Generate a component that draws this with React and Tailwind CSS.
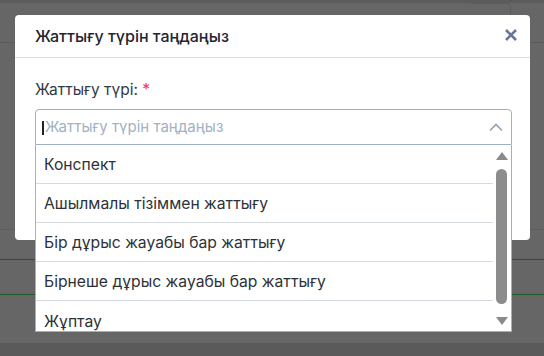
import React from "react";

const items = [
  "Конспект",
  "Ашылмалы тізіммен жаттығу",
  "Бір дұрыс жауабы бар жаттығу",
  "Бірнеше дұрыс жауабы бар жаттығу",
  "Жұптау",
];

export default function App() {
  return (
    <div
      className="relative w-[544px] h-[356px] overflow-hidden bg-[#666666]"
      style={{ fontFamily: "Inter, 'Noto Sans', sans-serif" }}
    >
      {/* background page under overlay */}
      <div className="flex flex-col h-full">
        <div className="h-[3px] bg-[#5b5b5b]" />
        <div className="h-[40px] border-b border-[#5a5a5a] flex">
          <div className="flex-1" />
          <div className="w-[40px] mr-[33px] border-r border-t border-[#5c5c5c] rounded-tr-[4px]" />
        </div>
        <div className="h-[187px] border-b border-[#5d5d5d]" />
        <div className="h-[30px] border-b border-[#1f5a2c]" />
        <div className="h-[35px] border-b border-[#1f5a2c]" />
        <div className="flex-1" />
        <div className="h-[13px] bg-[#5a5a5a]" />
      </div>

      {/* modal */}
      <div className="absolute inset-0 pt-[15px] pl-[15px]">
        <div className="w-[515px] h-[225px] bg-white rounded-[4px] flex flex-col">
          <div className="h-[43px] flex items-center justify-between pl-[20px] pr-[12px] border-b border-[#dcdde6]">
            <div className="text-[16px] font-medium text-[#1f2633]">Жаттығу түрін таңдаңыз</div>
            <svg width="14" height="14" viewBox="0 0 14 14" className="mt-[-2px] ml-[1px]">
              <path d="M2 2 L12 12 M12 2 L2 12" stroke="#65759a" strokeWidth="2.6" strokeLinecap="butt" />
            </svg>
          </div>
          <div className="pl-[20px] pt-[21px] flex flex-col">
            <div className="text-[15.5px] leading-[22px] text-[#333a44]">
              Жаттығу түрі: <span className="text-[#ff2d55]">*</span>
            </div>
            <div className="relative mt-[8px] w-[477px]">
              <div className="h-[36px] border border-[#9fb2c4] rounded-t-[4px] flex items-center pl-[6px] pr-[7px]">
                <div className="w-[2px] h-[14px] bg-[#222] mr-[1px] mt-[1px]" />
                <div className="flex-1 text-[15px] text-[#a3b1c2] pt-[1px]">Жаттығу түрін таңдаңыз</div>
                <svg width="16" height="10" viewBox="0 0 16 10">
                  <path d="M2 8.5 L8 2.5 L14 8.5" fill="none" stroke="#8ea3b7" strokeWidth="1.6" />
                </svg>
              </div>
              <div className="mt-[42px] w-[477px] h-[32px] border border-[#b0b6bc] border-r-[#f0a040] rounded-[3px]" />

              {/* dropdown */}
              <div className="absolute left-0 top-[36px] w-[477px] h-[187px] bg-white border border-t-0 border-[#9fb2c4] flex overflow-hidden">
                <div className="flex-1 flex flex-col">
                  {items.map((t, i) => (
                    <div
                      key={t}
                      className={`h-[39px] shrink-0 flex items-center pl-[8px] pt-[2px] text-[15.7px] text-[#2d3138] ${i < items.length - 1 ? "border-b border-[#d6dbe2]" : ""}`}
                    >
                      {t}
                    </div>
                  ))}
                </div>
                <div className="w-[18px] shrink-0 flex flex-col items-center pt-[7px] pb-[6px] pr-[1px]">
                  <svg width="12" height="8" viewBox="0 0 12 8">
                    <path d="M6 0 L12 8 L0 8 Z" fill="#8a8a8a" />
                  </svg>
                  <div className="w-[11px] flex-1 mt-[9px] mb-[13px] rounded-full bg-[#8c8c8c]" />
                  <svg width="12" height="8" viewBox="0 0 12 8">
                    <path d="M0 0 L12 0 L6 8 Z" fill="#8a8a8a" />
                  </svg>
                </div>
              </div>
            </div>
          </div>
        </div>
      </div>
    </div>
  );
}
